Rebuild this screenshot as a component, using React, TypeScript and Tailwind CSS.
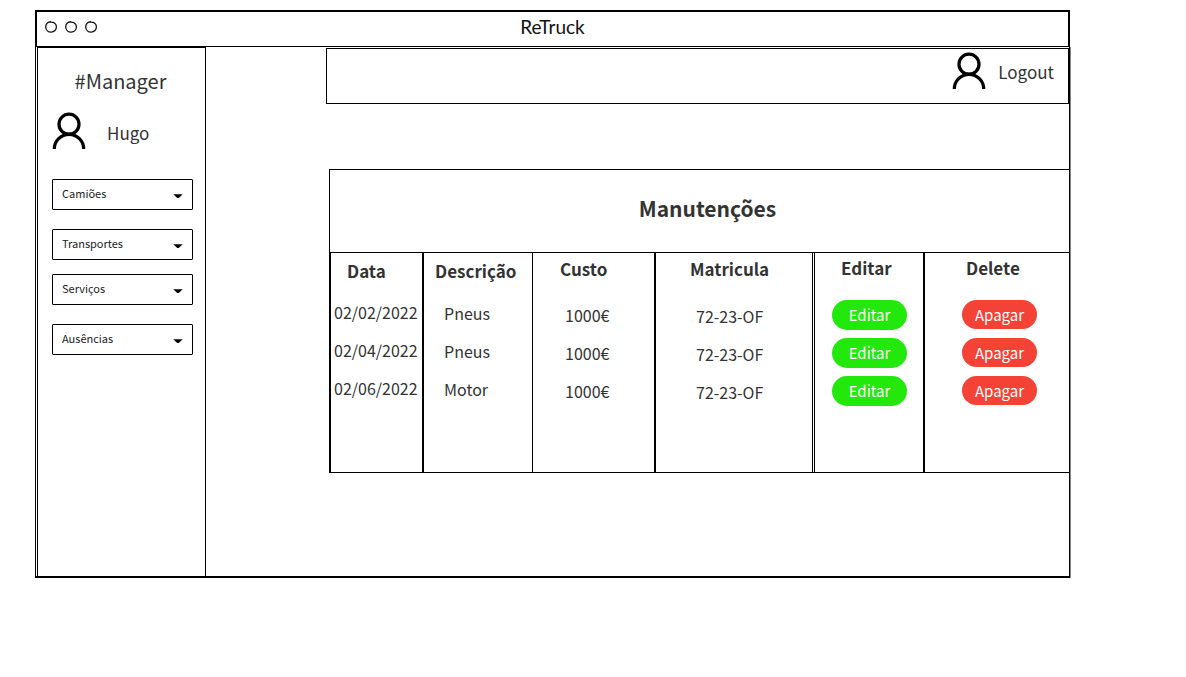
import React from "react";

type Row = { data: string; descricao: string; custo: string; matricula: string };

const rows: Row[] = [
  { data: "02/02/2022", descricao: "Pneus", custo: "1000€", matricula: "72-23-OF" },
  { data: "02/04/2022", descricao: "Pneus", custo: "1000€", matricula: "72-23-OF" },
  { data: "02/06/2022", descricao: "Motor", custo: "1000€", matricula: "72-23-OF" },
];

function UserIcon() {
  return (
    <svg width="34" height="38" viewBox="0 0 34 38" fill="none" stroke="#000" strokeWidth="3.200" aria-hidden="true">
      <circle cx="17" cy="12.200" r="10" />
      <path d="M2.300 37A14.700 14.700 0 0 1 31.700 37" />
    </svg>
  );
}

function WindowDots() {
  return (
    <svg width="54" height="14" viewBox="0 0 54 14" fill="none" stroke="#111" strokeWidth="1.300" aria-hidden="true">
      <path d="M7.300 1.800C3.800 1.500 1.600 4 1.700 7s2.500 5.200 5.500 5.100 5.300-2.300 5.200-5.300S10 1.900 6.500 2.100" />
      <path d="M27.300 1.800C23.800 1.500 21.600 4 21.700 7s2.500 5.200 5.500 5.100 5.300-2.300 5.200-5.300S30 1.900 26.500 2.100" />
      <path d="M47.300 1.800C43.800 1.500 41.600 4 41.700 7s2.500 5.200 5.500 5.100 5.300-2.300 5.200-5.300S50 1.900 46.500 2.100" />
    </svg>
  );
}

function MenuSelect({ label }: { label: string }) {
  return (
    <div className="relative">
      <select
        aria-label={label}
        className="block h-[31px] w-full appearance-none rounded-[1px] border border-black bg-white pr-6 pb-[3px] pl-[9px] text-[11px] text-[#222]"
      >
        <option>{label}</option>
      </select>
      <svg
        className="pointer-events-none absolute top-[14px] right-[10px]"
        width="10"
        height="6"
        viewBox="0 0 10 6"
        aria-hidden="true"
      >
        <path d="M0.300 1.300h9.400L6 4.700Q5 5.500 4 4.700Z" fill="#000" />
      </svg>
    </div>
  );
}

export default function App() {
  return (
    <div className="min-h-screen bg-white pt-[10px] pr-[116px] pl-[35px] font-['Noto_Sans_CJK_SC','Noto_Sans',sans-serif] text-[#333]">
      <header className="grid h-[37px] grid-cols-[1fr_auto_1fr] items-center border-2 border-b border-black">
        <div className="pb-1 pl-[7px]">
          <WindowDots />
        </div>
        <h1 className="pb-[5px] font-['Lato',sans-serif] text-[19px] leading-6 text-[#111]">ReTruck</h1>
      </header>

      <div className="flex min-h-[531px] border-x border-b-2 border-black pl-px shadow-[1px_0_0_#888]">
        <aside className="w-[169px] shrink-0 border border-b-0 border-black pt-[17px] pr-3 pl-[14px]">
          <h2 className="pr-1 text-center text-[20px] leading-8">#Manager</h2>
          <div className="mt-[15px] flex items-center gap-[21px]">
            <UserIcon />
            <span className="pt-1 text-[17px] leading-6">Hugo</span>
          </div>
          <nav className="mt-[29px] flex flex-col gap-[19px]">
            <MenuSelect label="Camiões" />
            <div className="flex flex-col gap-[14px]">
              <MenuSelect label="Transportes" />
              <MenuSelect label="Serviços" />
            </div>
            <MenuSelect label="Ausências" />
          </nav>
        </aside>

        <main className="min-w-0 flex-1">
          <div className="mt-px ml-[120px] flex h-14 items-start justify-end border border-black pt-[3px] pr-[14px]">
            <button type="button" className="flex items-center gap-3 text-[17px] leading-6">
              <UserIcon />
              <span className="pt-[2px]">Logout</span>
            </button>
          </div>

          <section className="mt-[65px] ml-[123px] border-t border-l border-black">
            <h2 className="flex h-[82px] items-center justify-center pb-1 pl-4 text-[21px] font-bold">Manutenções</h2>
            <table className="w-full table-fixed border-separate border-spacing-0 border-t border-b border-l border-black text-left text-[16px] leading-6">
              <colgroup>
                <col className="w-[93px]" />
                <col className="w-[109px]" />
                <col className="w-[123px]" />
                <col className="w-[159px]" />
                <col className="w-[110px]" />
                <col />
              </colgroup>
              <thead className="text-[17px]">
                <tr className="h-[45px] align-top">
                  <th className="border-r-2 border-black pt-[6px] pl-4">Data</th>
                  <th className="border-r border-black pt-[6px] pl-[11px]">Descrição</th>
                  <th className="border-r-2 border-black pt-1 pl-[27px]">Custo</th>
                  <th className="border-r-3 border-double border-black pt-1 pl-[34px]">Matricula</th>
                  <th className="border-r-2 border-black pt-[3px] pl-[26px]">Editar</th>
                  <th className="pt-[3px] pl-[41px]">Delete</th>
                </tr>
              </thead>
              <tbody>
                {rows.map((row) => (
                  <tr key={row.data} className="h-[38px] align-top">
                    <td className="border-r-2 border-black pt-[2px] pl-[3px]">{row.data}</td>
                    <td className="border-r border-black pt-[3px] pl-5">{row.descricao}</td>
                    <td className="border-r-2 border-black pt-[5px] pl-8">{row.custo}</td>
                    <td className="border-r-3 border-double border-black pt-[6px] pl-10">{row.matricula}</td>
                    <td className="border-r-2 border-black pt-[2px] pl-[17px]">
                      <button type="button" className="h-[30px] w-[75px] rounded-full bg-[#22e80c] text-[15px] leading-6 text-white">
                        Editar
                      </button>
                    </td>
                    <td className="pt-[2px] pl-[37px]">
                      <button type="button" className="h-[29px] w-[75px] rounded-full bg-[#f44336] text-[15px] leading-6 text-white">
                        Apagar
                      </button>
                    </td>
                  </tr>
                ))}
                <tr className="h-[60px]">
                  <td className="border-r-2 border-black" />
                  <td className="border-r border-black" />
                  <td className="border-r-2 border-black" />
                  <td className="border-r-3 border-double border-black" />
                  <td className="border-r-2 border-black" />
                  <td />
                </tr>
              </tbody>
            </table>
          </section>
        </main>
      </div>
    </div>
  );
}
